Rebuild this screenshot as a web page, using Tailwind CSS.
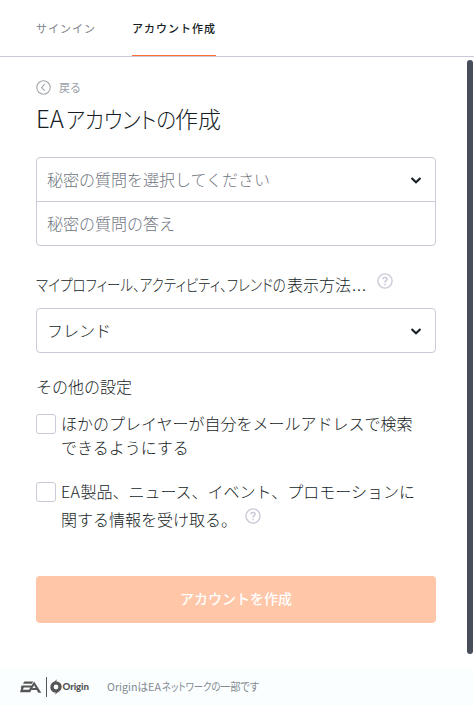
<!DOCTYPE html>
<html lang="ja">
<head>
<meta charset="utf-8">
<title>EAアカウントの作成</title>
<script src="https://cdn.jsdelivr.net/npm/@tailwindcss/browser@4"></script>
</head>
<body class="bg-white">
<div class="relative flex h-[706px] w-[474px] flex-col overflow-hidden bg-white font-['Noto_Sans_CJK_JP',sans-serif] font-light text-[#161d25]">
  <nav class="flex h-[57px] shrink-0 border-b border-[#cacad9] pl-9 text-[11px] font-normal tracking-[1px]">
    <a class="mr-9 h-[56px] w-[60px] whitespace-nowrap leading-[56px] text-[#7c828a]">サインイン</a>
    <a class="h-[56px] w-[84px] whitespace-nowrap border-b border-[#ff6c36] font-medium leading-[56px]">アカウント作成</a>
  </nav>
  <main class="flex h-[611px] shrink-0 flex-col pl-9 pr-[38px]">
    <a class="mt-[22px] flex h-4 items-center gap-2 text-[11px] font-normal leading-4 text-[#9a9ea5]">
      <svg class="size-[15px]" viewBox="0 0 15 15" fill="none" stroke="#a5a9af" stroke-width="1.1"><circle cx="7.5" cy="7.5" r="6.7"/><path d="M8.8 4.2 5.600 7.500l3.200 3.300"/></svg>戻る</a>
    <h1 class="flex h-[62px] whitespace-nowrap pt-[4px] text-[23px] leading-[38px] [font-feature-settings:'palt']"><span class="w-[30px] text-[24px]">EA</span><span class="w-[109px] origin-left scale-x-[0.89]">アカウントの</span><span>作成</span></h1>
    <div class="h-[89px] shrink-0 rounded border border-[#cacad9] text-base text-[#6f757e]">
      <div class="flex h-[44px] items-center justify-between border-b border-[#cacad9] pl-[10px] pr-[13px]"><span class="-mt-[2px]">秘密の質問を選択してください</span>
        <svg class="size-[12px]" viewBox="0 0 12 12" fill="none" stroke="#161d25" stroke-width="2.100"><path d="m1.500 4 4.500 4.200L10.500 4"/></svg></div>
      <div class="flex h-[43px] items-center pl-[10px]"><span class="-mt-[2px]">秘密の質問の答え</span></div>
    </div>
    <div class="mt-[26px] flex h-[26px] shrink-0 text-base leading-6 [font-feature-settings:'palt']">
      <span class="w-[251px] origin-left scale-x-[0.845] whitespace-nowrap">マイプロフィール、アクティビティ、フレンドの</span>
      <span class="w-[90px] whitespace-nowrap">表示方法<span class="pl-px tracking-[1px]">...</span></span>
      <svg class="mt-px size-4 shrink-0" viewBox="0 0 16 16" fill="none" stroke="#cacad9" stroke-width="1.400"><circle cx="8" cy="8" r="7.100"/><path d="M5.800 6.200c.2-2.400 4.400-2.200 4.200.1C9.900 7.800 8 7.700 8 9.400M8 10.700v1.500" stroke-width="1.600"/></svg>
    </div>
    <div class="mt-[10px] flex h-[45px] shrink-0 items-center justify-between rounded border border-[#cacad9] pl-[10px] pr-[13px] text-base"><span class="-mt-[2px]">フレンド</span>
      <svg class="size-[12px]" viewBox="0 0 12 12" fill="none" stroke="#161d25" stroke-width="2.100"><path d="m1.500 4 4.500 4.200L10.500 4"/></svg></div>
    <h2 class="mt-[21px] h-[25px] text-base leading-6">その他の設定</h2>
    <label class="mt-[12px] flex h-[51px] gap-[5px] text-base leading-6"><span class="mt-[3px] size-5 shrink-0 rounded-[3px] border border-[#cacad9]"></span><span class="whitespace-nowrap">ほかのプレイヤーが自分をメールアドレスで検索<br>できるようにする</span></label>
    <label class="mt-[18px] flex h-[54px] gap-[5px] text-base leading-7"><span class="mt-[2px] size-5 shrink-0 rounded-[3px] border border-[#cacad9]"></span>
      <span class="-mt-[3px] whitespace-nowrap"><span class="tracking-[0.400px]">EA</span>製品、ニュース、イベント、プロモーションに<br><span class="flex gap-2"><span>関する情報を受け取る。</span>
      <svg class="mt-[3px] size-4 shrink-0" viewBox="0 0 16 16" fill="none" stroke="#cacad9" stroke-width="1.400"><circle cx="8" cy="8" r="7.100"/><path d="M5.800 6.200c.2-2.400 4.400-2.200 4.200.1C9.900 7.800 8 7.700 8 9.400M8 10.700v1.500" stroke-width="1.600"/></svg></span></span></label>
    <button class="mt-[42px] h-[47px] shrink-0 rounded bg-[#ffc6a8] pb-[3px] text-sm font-medium text-white">アカウントを作成</button>
  </main>
  <footer class="flex h-[38px] items-center bg-[#fafeff] pl-5 text-[11px] font-normal text-[#858a92]">
    <svg class="h-5 w-[70px] shrink-0" viewBox="0 0 70 20">
      <g fill="#555"><path d="M4.300 4.500H13.200l-1.300 2.200H3zM1.800 8.400h9.900l-1.400 2.200H.5zM2 8.400h2.900l-2.100 4.300h6.200l5.100-8.200 7.200 11.300h-3L14.100 8.300l-4 6.900H0zM12.700 10.900h5.500l1.300 2.200h-8z"/></g>
      <path d="M26.500 0v20" stroke="#555"/>
      <path fill="#555" fill-rule="evenodd" d="M37 2.300 36.200 4.400c3.200 0 5.500 2.400 5.500 5.400 0 3-2 4.700-4.200 5.600l-2.500 2.300.8-2.100c-3.200 0-5.500-2.400-5.500-5.400 0-3 2-4.700 4.200-5.600zM36 7.600a2.400 2.400 0 1 0 0 4.800 2.400 2.400 0 0 0 0-4.800"/>
      <text x="42.500" y="13.300" font-family="Lato,sans-serif" font-size="9.700" font-weight="900" fill="#555" textLength="26.500">Origin</text>
    </svg>
    <span class="-mt-[2px] ml-[17px] flex whitespace-nowrap [font-feature-settings:'palt']"><span class="w-[55px] origin-left scale-x-[0.970]">OriginはEA</span><span class="w-[58px] origin-left scale-x-[0.850]">ネットワークの</span><span class="w-[41px] origin-left scale-x-[0.930]">一部です</span></span>
  </footer>
  <div class="absolute left-[467px] top-[60px] h-[594px] w-[6px] rounded-full bg-[#474d59]"></div>
</div>
</body>
</html>
